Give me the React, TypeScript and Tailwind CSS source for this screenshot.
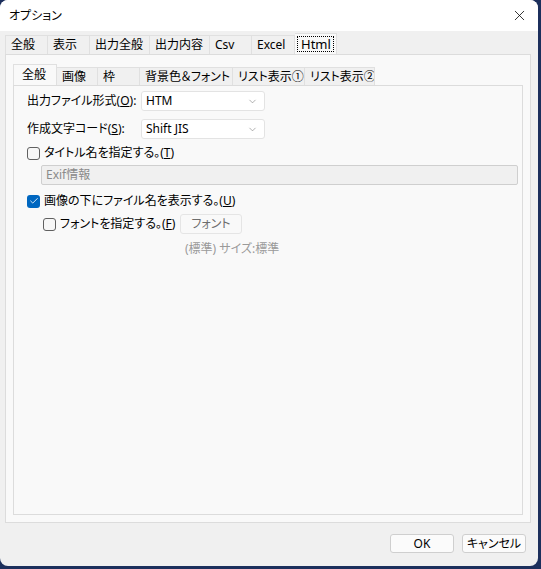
import { Check, ChevronDown, X } from "lucide-react";

const font = { fontFamily: '"Noto Sans", "Noto Sans CJK JP", sans-serif' };

const outerTabs = ["全般", "表示", "出力全般", "出力内容", "Csv", "Excel", "Html"];
const outerWidths = ["w-[43px]", "w-[42px]", "w-[60px]", "w-[60px]", "w-[42px]", "w-[43px]", "w-[42px]"];
const innerTabs = ["全般", "画像", "枠", "背景色＆フォント", "リスト表示①", "リスト表示②"];
const innerWidths = ["w-[44px]", "w-[41px]", "w-[42px]", "w-[93px]", "w-[72px]", "w-[70px]"];

function Combo({ value }: { value: string }) {
  return (
    <div className="flex h-[20px] w-[124px] items-center justify-between rounded-[3px] border border-[#e3e3e3] bg-white pl-[4px] pr-[6px] text-[12px] text-black">
      <span>{value}</span>
      <ChevronDown size={11} strokeWidth={1.2} className="text-[#707070]" />
    </div>
  );
}

function Box({ checked }: { checked?: boolean }) {
  return checked ? (
    <span className="flex h-[13px] w-[13px] shrink-0 items-center justify-center rounded-[3px] bg-[#0067c0]">
      <Check size={10} strokeWidth={2} className="text-white" />
    </span>
  ) : (
    <span className="h-[13px] w-[13px] shrink-0 rounded-[3px] border border-[#606060] bg-[#f7f7f7]" />
  );
}

export default function App() {
  return (
    <div className="h-[569px] w-[541px] bg-[#1c2f5c]" style={font}>
      <div className="flex h-[566px] w-[538px] flex-col overflow-hidden whitespace-nowrap rounded-[8px] bg-[#f0f0f0] [font-feature-settings:'palt']">
        {/* title bar */}
        <div className="flex h-[31px] shrink-0 items-center justify-between bg-white pl-[9px] pr-[10px]">
          <span className="text-[12px] text-black">オプション</span>
          <X size={17} strokeWidth={1.1} className="text-black" />
        </div>

        {/* outer tabs */}
        <div className="flex h-[23px] items-end pl-[5px] pt-[4px]">
          {outerTabs.map((t, i) => {
            const active = t === "Html";
            return (
              <div
                key={t}
                className={`flex items-center overflow-hidden border-t border-r border-[#e0e0e0] text-[12px] text-black ${outerWidths[i]} ${
                  i === 0 ? "border-l" : ""
                } ${active ? "-mt-[2px] h-[21px] bg-[#f9f9f9] px-[2px]" : "h-[19px] bg-[#f0f0f0] pl-[5px]"}`}
              >
                {active ? (
                  <span className="flex h-[16px] w-full items-center border border-dotted border-black pl-[3px] text-[13px] leading-none">
                    {t}
                  </span>
                ) : (
                  t
                )}
              </div>
            );
          })}
        </div>

        {/* outer panel */}
        <div className="ml-[5px] mr-[7px] flex h-[469px] flex-col border border-[#dcdcdc] bg-[#f9f9f9] pl-[7px] pr-[7px] pt-[11px] pb-[7px]">
          {/* inner tabs */}
          <div className="flex h-[19px] items-end">
            {innerTabs.map((t, i) => {
              const active = i === 0;
              return (
                <div
                  key={t}
                  className={`flex items-center overflow-hidden border-t border-r border-[#e0e0e0] text-[12px] text-black ${innerWidths[i]} ${
                    i === 0 ? "border-l" : ""
                  } ${active ? "-mt-[2px] h-[21px] bg-[#f9f9f9] pl-[8px]" : "h-[18px] bg-[#f0f0f0] pl-[5px]"}`}
                >
                  {t}
                </div>
              );
            })}
          </div>

          {/* inner panel */}
          <div className="flex flex-1 flex-col border border-[#dcdcdc] bg-[#f9f9f9] pl-[13px] pr-[4px] pt-[5px] text-[12px] text-black">
            <div className="flex h-[20px] items-center">
              <span className="w-[114px]">
                出力ファイル形式(<span className="underline">O</span>):
              </span>
              <Combo value="HTM" />
            </div>
            <div className="mt-[8px] flex h-[20px] items-center">
              <span className="w-[114px]">
                作成文字コード(<span className="underline">S</span>):
              </span>
              <Combo value="Shift JIS" />
            </div>
            <div className="mt-[6px] flex h-[16px] items-center gap-[4px]">
              <Box />
              <span>
                タイトル名を指定する。(<span className="underline">T</span>)
              </span>
            </div>
            <div className="ml-[14px] mt-[4px] flex h-[20px] items-center rounded-[2px] border border-[#cfcfcf] bg-[#f0f0f0] pl-[4px] text-[#8a8a8a]">
              Exif情報
            </div>
            <div className="mt-[8px] flex h-[16px] items-center gap-[4px]">
              <Box checked />
              <span>
                画像の下にファイル名を表示する。(<span className="underline">U</span>)
              </span>
            </div>
            <div className="ml-[16px] mt-[5px] flex items-center">
              <div className="flex h-[16px] w-[137px] items-center gap-[4px]">
                <Box />
                <span>
                  フォントを指定する。(<span className="underline">F</span>)
                </span>
              </div>
              <div className="flex h-[20px] w-[62px] items-center justify-center rounded-[3px] border border-[#e5e5e5] bg-[#f9f9f9] text-[#6d6d6d]">
                フォント
              </div>
            </div>
            <div className="ml-[158px] mt-[6px] text-[#9a9a9a]">(標準) サイズ:標準</div>
          </div>
        </div>

        {/* footer buttons */}
        <div className="flex justify-end gap-[8px] pr-[12px] pt-[11px]">
          <button className="flex h-[19px] w-[64px] items-center justify-center rounded-[3px] border border-[#cfcfcf] bg-[#fbfbfb] text-[12px] text-black">
            OK
          </button>
          <button className="flex h-[19px] w-[64px] items-center justify-center rounded-[3px] border border-[#cfcfcf] bg-[#fbfbfb] text-[12px] text-black">
            キャンセル
          </button>
        </div>
      </div>
    </div>
  );
}
